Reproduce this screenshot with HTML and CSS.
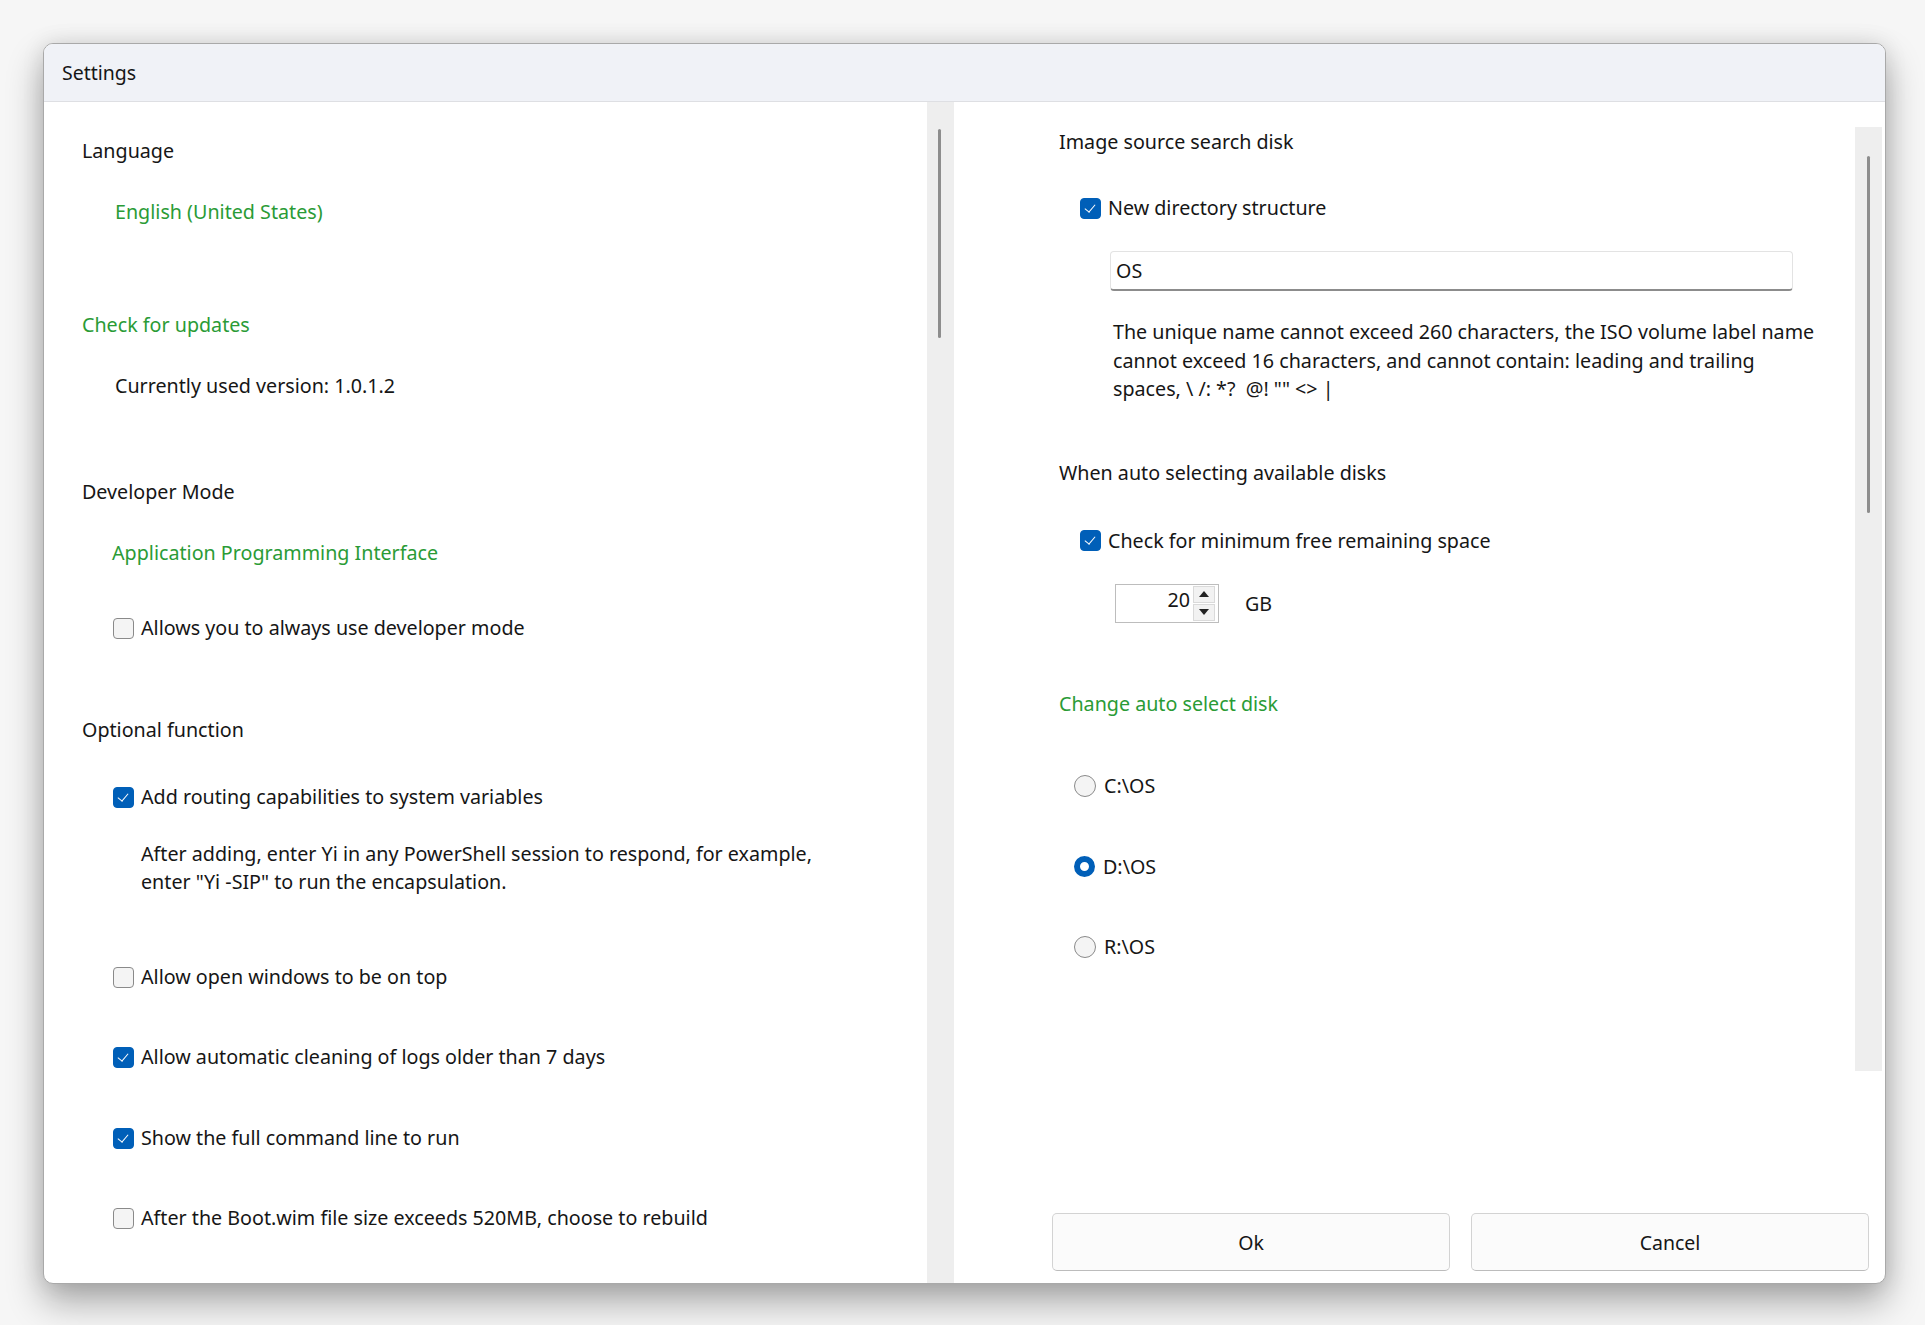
FILE: index.html
```html
<!DOCTYPE html>
<html lang="en">
<head>
<meta charset="utf-8">
<title>Settings</title>
<link rel="stylesheet" href="styles.css">
</head>
<body>
<div class="window">
  <div class="titlebar">Settings</div>
  <div class="panes">
    <div class="left">
      <div class="left-content">
        <div class="row heading first">Language</div>
        <div class="row link indent g33">English (United States)</div>

        <div class="row link g85">Check for updates</div>
        <div class="row indent g33">Currently used version: 1.0.1.2</div>

        <div class="row heading g78">Developer Mode</div>
        <div class="row link indent-api g33">Application Programming Interface</div>
        <label class="row check g47"><span class="cb"></span><span>Allows you to always use developer mode</span></label>

        <div class="row heading g74">Optional function</div>
        <label class="row check g39"><span class="cb on"></span><span>Add routing capabilities to system variables</span></label>
        <div class="desc g29">After adding, enter Yi in any PowerShell session to respond, for example,<br>enter "Yi -SIP" to run the encapsulation.</div>
        <label class="row check g67"><span class="cb"></span><span>Allow open windows to be on top</span></label>
        <label class="row check g52"><span class="cb on"></span><span>Allow automatic cleaning of logs older than 7 days</span></label>
        <label class="row check g53"><span class="cb on"></span><span>Show the full command line to run</span></label>
        <label class="row check g52"><span class="cb"></span><span>After the Boot.wim file size exceeds 520MB, choose to rebuild</span></label>
      </div>
      <div class="vscroll left-scroll"><div class="thumb left-thumb"></div></div>
    </div>

    <div class="right">
      <div class="scrollarea">
        <div class="right-content">
          <div class="row heading">Image source search disk</div>
          <label class="row check r-check g38"><span class="cb on"></span><span>New directory structure</span></label>
          <div class="textbox g29">OS</div>
          <div class="rdesc g27">The unique name cannot exceed 260 characters, the ISO volume label name<br>cannot exceed 16 characters, and cannot contain: leading and trailing<br>spaces, \ /: *?&nbsp; @! "" &lt;&gt; |</div>

          <div class="row heading g55">When auto selecting available disks</div>
          <label class="row check r-check g40"><span class="cb on"></span><span>Check for minimum free remaining space</span></label>
          <div class="spin-row g29">
            <div class="spinner">
              <span class="spin-val">20</span>
              <span class="spin-btns">
                <span class="spin-btn"><span class="tri up"></span></span>
                <span class="spin-btn"><span class="tri down"></span></span>
              </span>
            </div>
            <span class="unit">GB</span>
          </div>

          <div class="row link g67">Change auto select disk</div>
          <label class="row radio g54"><span class="rb"></span><span>C:\OS</span></label>
          <label class="row radio g53"><span class="rb on"></span><span>D:\OS</span></label>
          <label class="row radio g52"><span class="rb"></span><span>R:\OS</span></label>
        </div>
        <div class="vscroll right-scroll"><div class="thumb right-thumb"></div></div>
      </div>
      <div class="buttons">
        <button class="btn">Ok</button>
        <button class="btn">Cancel</button>
      </div>
    </div>
  </div>
</div>
</body>
</html>
```
FILE: styles.css
```css
html, body {
  margin: 0;
  padding: 0;
}
body {
  width: 1925px;
  height: 1325px;
  background: #f6f6f6;
  font-family: "Noto Sans", "Open Sans", sans-serif;
  font-size: 19.7px;
  color: #161616;
  overflow: hidden;
}
.window {
  margin: 43px 0 0 43px;
  width: 1841px;
  height: 1239px;
  border: 1px solid #a9a9a9;
  border-radius: 10px;
  background: #ffffff;
  overflow: hidden;
  display: flex;
  flex-direction: column;
  box-shadow: 0 18px 36px rgba(0, 0, 0, 0.32), 0 0 22px rgba(0, 0, 0, 0.10);
}
.titlebar {
  height: 57px;
  flex: none;
  background: #f0f2f7;
  border-bottom: 1px solid #dedfe3;
  display: flex;
  align-items: center;
  padding-left: 18px;
  font-size: 19.5px;
}
.panes {
  flex: 1;
  display: flex;
  min-height: 0;
}
.left {
  width: 910px;
  flex: none;
  display: flex;
}
.left-content {
  flex: 1;
  padding: 35px 0 0 38px;
}
.vscroll {
  width: 27px;
  flex: none;
  background: #eeeeee;
  position: relative;
}
.thumb {
  position: absolute;
  width: 3px;
  background: #8d8d8d;
  border-radius: 2px;
}
.left-thumb {
  left: 11px;
  top: 27px;
  height: 209px;
}
.right {
  flex: 1;
  display: flex;
  flex-direction: column;
}
.scrollarea {
  margin-top: 25px;
  height: 944px;
  display: flex;
  margin-right: 3px;
}
.right-content {
  flex: 1;
  padding-left: 105px;
  padding-top: 1px;
}
.right-thumb {
  left: 12px;
  top: 29px;
  height: 357px;
}
.row {
  display: flex;
  align-items: center;
  height: 28px;
  line-height: 28px;
  white-space: nowrap;
}
.link {
  color: #2a9b36;
}
.indent {
  margin-left: 33px;
}
.indent-api {
  margin-left: 30px;
}
.check {
  margin-left: 31px;
  gap: 7px;
}
.r-check {
  margin-left: 21px;
}
.cb {
  width: 19px;
  height: 19px;
  border: 1px solid #8a8a8a;
  border-radius: 4px;
  background: #f4f4f4;
  flex: none;
  position: relative;
  box-sizing: content-box;
}
.cb.on {
  background: #005fb8;
  border-color: #005fb8;
}
.cb.on::after {
  content: "";
  position: absolute;
  left: 6px;
  top: 3px;
  width: 5px;
  height: 9px;
  border-right: 1.5px solid #ffffff;
  border-bottom: 1.5px solid #ffffff;
  transform: rotate(40deg);
}
.desc {
  margin-left: 59px;
  line-height: 28px;
  white-space: nowrap;
}
.rdesc {
  margin-left: 54px;
  line-height: 28.5px;
  white-space: nowrap;
}
.textbox {
  margin-left: 51px;
  width: 683px;
  border: 1px solid #e3e3e3;
  border-bottom: 2px solid #8c8c8c;
  border-radius: 4px;
  box-sizing: border-box;
  height: 40px;
  display: flex;
  align-items: center;
  padding-left: 5px;
}
.spin-row {
  display: flex;
  align-items: center;
  margin-left: 56px;
  height: 39px;
}
.spinner {
  width: 104px;
  height: 39px;
  box-sizing: border-box;
  border: 1px solid #bdbdbd;
  display: flex;
  align-items: center;
  justify-content: flex-end;
  padding-right: 3px;
}
.spin-val {
  margin-right: 3px;
  margin-top: -8px;
}
.spin-btns {
  display: flex;
  flex-direction: column;
  gap: 1px;
  align-self: center;
}
.spin-btn {
  width: 20px;
  height: 15px;
  background: #f2f2f2;
  border: 1px solid #dadada;
  display: flex;
  align-items: center;
  justify-content: center;
}
.tri {
  width: 0;
  height: 0;
  border-left: 5px solid transparent;
  border-right: 5px solid transparent;
}
.tri.up {
  border-bottom: 6px solid #222;
}
.tri.down {
  border-top: 6px solid #222;
}
.unit {
  margin-left: 26px;
}
.radio {
  margin-left: 15px;
  gap: 8px;
}
.rb {
  width: 20px;
  height: 20px;
  border: 1.5px solid #8a8a8a;
  border-radius: 50%;
  background: #f4f4f4;
  flex: none;
}
.rb.on {
  width: 9px;
  height: 9px;
  border: 6.5px solid #005fb8;
  background: #ffffff;
}
.buttons {
  margin-top: 142px;
  display: flex;
  gap: 21px;
  padding-left: 98px;
}
.btn {
  width: 398px;
  height: 58px;
  border: 1px solid #d3d3d3;
  border-bottom-color: #bcbcbc;
  border-radius: 5px;
  background: #fbfbfb;
  font-family: "Noto Sans", "Open Sans", sans-serif;
  font-size: 19.5px;
  color: #161616;
}
.first { margin-top: 0; }
.g27 { margin-top: 27px; }
.g29 { margin-top: 29px; }
.g33 { margin-top: 33px; }
.g38 { margin-top: 38px; }
.g39 { margin-top: 39px; }
.g40 { margin-top: 40px; }
.g47 { margin-top: 47px; }
.g52 { margin-top: 52px; }
.g53 { margin-top: 53px; }
.g54 { margin-top: 54px; }
.g55 { margin-top: 55px; }
.g67 { margin-top: 67px; }
.g74 { margin-top: 74px; }
.g78 { margin-top: 78px; }
.g85 { margin-top: 85px; }
```
